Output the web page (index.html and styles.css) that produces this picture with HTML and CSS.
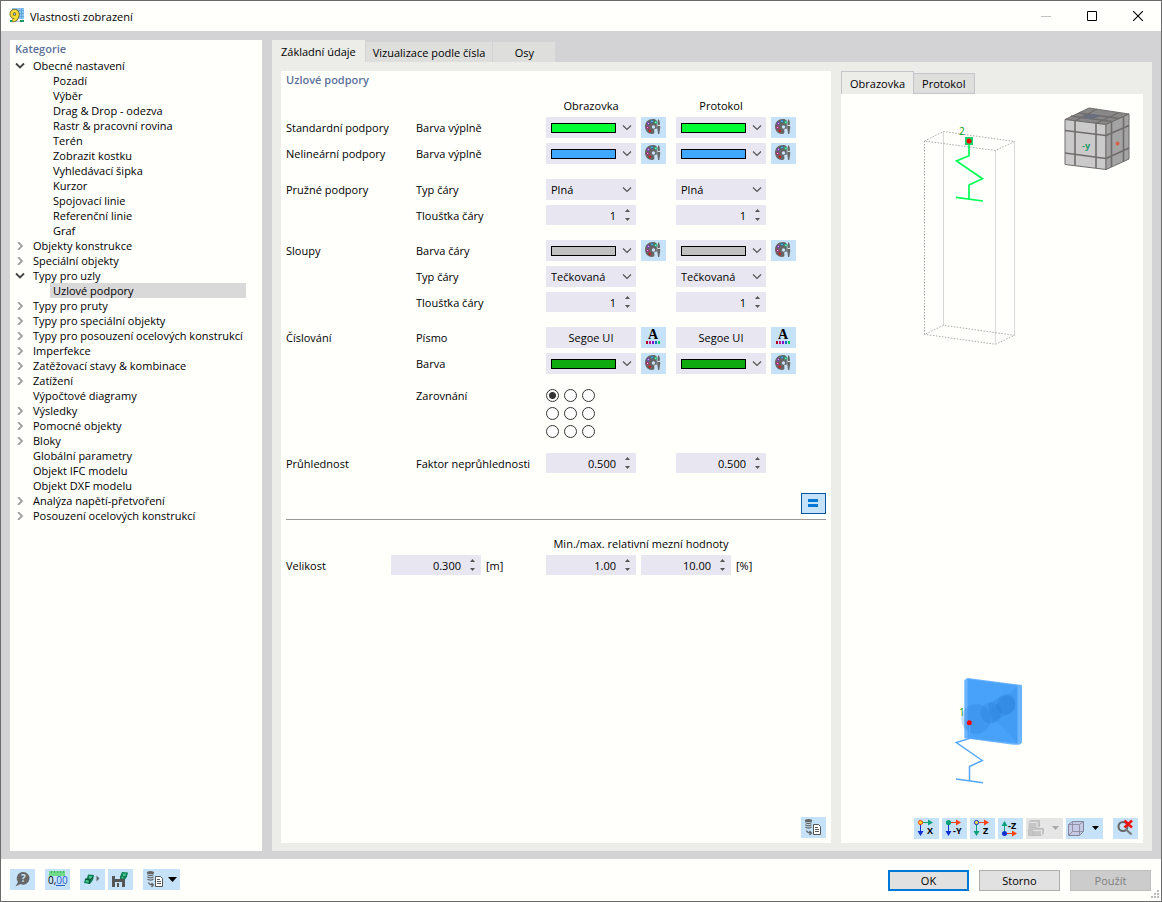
FILE: index.html
```html
<!DOCTYPE html>
<html lang="cs">
<head>
    <meta charset="UTF-8">
    <meta name="viewport" content="width=device-width, initial-scale=1.0">
    <title>Vlastnosti zobrazení</title>
    <link rel="stylesheet" href="styles.css">
</head>
<body>
    <!-- shared icons -->
    <svg class="defs" aria-hidden="true">
        <symbol id="open" viewBox="0 0 10 8"><path d="M1 1.500l4 4 4-4" fill="none" stroke="#444" stroke-width="1.800"/></symbol>
        <symbol id="closed" viewBox="0 0 10 8"><path d="M3 0l4 4-4 4" fill="none" stroke="#a0a0a0" stroke-width="1.800"/></symbol>
        <symbol id="chevron" viewBox="0 0 10 6"><path d="M1 .5l4 4 4-4" fill="none" stroke="#555" stroke-width="1.200"/></symbol>
        <symbol id="palette" viewBox="0 0 25 21">
            <path d="M12 2C7 2 4 5.500 4 9.500c0 4.500 3 7.500 7 7.500 2.300 0 2.800-1.500 2.300-3-.5-1.500.2-2.200 1.300-2.200h1.200V4C15 2.500 13.800 2 12 2z" fill="#666"/>
            <circle cx="12.500" cy="10" r="1.700" fill="#c5e2f8"/>
            <circle cx="7.300" cy="6.500" r="1.300" fill="#8a2be2"/><circle cx="11" cy="4.200" r="1.300" fill="#0a84c0"/>
            <circle cx="14.800" cy="5.300" r="1.400" fill="#10c878"/><circle cx="6.500" cy="10.500" r="1.300" fill="#d0108c"/>
            <circle cx="8.800" cy="13.800" r="1.400" fill="#d02020"/>
            <g fill="#fff"><circle cx="7.300" cy="6.500" r=".5"/><circle cx="14.800" cy="5.300" r=".5"/><circle cx="6.500" cy="10.500" r=".5"/><circle cx="11" cy="4.200" r=".5"/></g>
            <path d="M17.500 2c1.200 1.500 1.800 4 1.200 6l.6 2-1 7h-1.200l-1-7 .6-2c-.4-2-.2-4 .8-6z" fill="#666"/>
            <path d="M16.800 8.500h2.400" stroke="#ddd" stroke-width="1"/>
        </symbol>
        <symbol id="database" viewBox="0 0 25 21">
            <g fill="none" stroke="#666" stroke-width="1.200"><ellipse cx="7.500" cy="3.700" rx="3" ry="1" fill="#666"/><path d="M4.500 5.500c1 1.500 5 1.500 6 0M4.500 7.700c1 1.500 5 1.500 6 0M4.500 9.900c1 1.500 5 1.500 6 0M5.500 13.500c.5 1.500 2 2.500 5 2.500M8.500 14l2 2-2 2"/></g>
            <path d="M12.500 7.500h5l2 2v8h-7z" fill="#fff" stroke="#555"/><path d="M14 10.500h3M14 12.500h4M14 14.500h4" stroke="#555"/>
        </symbol>
    </svg>

    <div class="window">
        <header class="titlebar">
            <svg class="app-icon" width="16" height="16" viewBox="0 0 16 16" aria-hidden="true">
                <path d="M3 0h12v11H3z" fill="#8dc4f0"/><path d="M4 2.500h11M8 5.500h7M10 8.500h5M12.500 0v11" stroke="#5ba3df" stroke-width=".8"/>
                <path d="M2 13h13v1H2z" fill="#b9c9d2"/><path d="M11 12h4v2h-4zM1 12h3v2H1z" fill="#169860"/>
                <g fill="none" stroke="#6d6220" stroke-width="4"><circle cx="5.500" cy="6" r="3"/><path d="M8.500 6c0 4-1.500 6-5 6.500"/></g>
                <g fill="none" stroke="#f7dc37" stroke-width="2.400"><circle cx="5.500" cy="6" r="3"/><path d="M8.500 6c0 4-1.500 6-5 6.500"/></g>
            </svg>
            <h1>Vlastnosti zobrazení</h1>
            <button class="win-button" aria-label="Minimalizovat" disabled><svg width="10" height="10"><path d="M0 5.500h10" stroke="#c4c4c4"/></svg></button>
            <button class="win-button" aria-label="Maximalizovat"><svg width="10" height="10"><path d="M.5.500h9v9h-9z" fill="none" stroke="#000"/></svg></button>
            <button class="win-button" aria-label="Zavřít"><svg width="10" height="10"><path d="M0 0l10 10M10 0L0 10" stroke="#000" stroke-width="1.100"/></svg></button>
        </header>

        <main class="content">
            <nav class="categories" aria-label="Kategorie">
                <h2>Kategorie</h2>
                <ul class="tree">
                    <li><a href="#"><svg><use href="#open"/></svg>Obecné nastavení</a>
                        <ul>
                            <li><a href="#">Pozadí</a></li>
                            <li><a href="#">Výběr</a></li>
                            <li><a href="#">Drag &amp; Drop - odezva</a></li>
                            <li><a href="#">Rastr &amp; pracovní rovina</a></li>
                            <li><a href="#">Terén</a></li>
                            <li><a href="#">Zobrazit kostku</a></li>
                            <li><a href="#">Vyhledávací šipka</a></li>
                            <li><a href="#">Kurzor</a></li>
                            <li><a href="#">Spojovací linie</a></li>
                            <li><a href="#">Referenční linie</a></li>
                            <li><a href="#">Graf</a></li>
                        </ul>
                    </li>
                    <li><a href="#"><svg><use href="#closed"/></svg>Objekty konstrukce</a></li>
                    <li><a href="#"><svg><use href="#closed"/></svg>Speciální objekty</a></li>
                    <li><a href="#"><svg><use href="#open"/></svg>Typy pro uzly</a>
                        <ul>
                            <li><a href="#" class="selected" aria-current="true">Uzlové podpory</a></li>
                        </ul>
                    </li>
                    <li><a href="#"><svg><use href="#closed"/></svg>Typy pro pruty</a></li>
                    <li><a href="#"><svg><use href="#closed"/></svg>Typy pro speciální objekty</a></li>
                    <li><a href="#"><svg><use href="#closed"/></svg>Typy pro posouzení ocelových konstrukcí</a></li>
                    <li><a href="#"><svg><use href="#closed"/></svg>Imperfekce</a></li>
                    <li><a href="#"><svg><use href="#closed"/></svg>Zatěžovací stavy &amp; kombinace</a></li>
                    <li><a href="#"><svg><use href="#closed"/></svg>Zatížení</a></li>
                    <li><a href="#"><svg></svg>Výpočtové diagramy</a></li>
                    <li><a href="#"><svg><use href="#closed"/></svg>Výsledky</a></li>
                    <li><a href="#"><svg><use href="#closed"/></svg>Pomocné objekty</a></li>
                    <li><a href="#"><svg><use href="#closed"/></svg>Bloky</a></li>
                    <li><a href="#"><svg></svg>Globální parametry</a></li>
                    <li><a href="#"><svg></svg>Objekt IFC modelu</a></li>
                    <li><a href="#"><svg></svg>Objekt DXF modelu</a></li>
                    <li><a href="#"><svg><use href="#closed"/></svg>Analýza napětí-přetvoření</a></li>
                    <li><a href="#"><svg><use href="#closed"/></svg>Posouzení ocelových konstrukcí</a></li>
                </ul>
            </nav>

            <div class="editor">
                <div class="tabs" role="tablist">
                    <button class="tab active" role="tab" aria-selected="true">Základní údaje</button>
                    <button class="tab" role="tab">Vizualizace podle čísla</button>
                    <button class="tab" role="tab">Osy</button>
                </div>

                <div class="panel">
                    <form class="settings">
                        <h2>Uzlové podpory</h2>
                        <div class="row head"><span class="col-screen">Obrazovka</span><span>Protokol</span></div>

                        <div class="group">
                            <div class="row">
                                <span>Standardní podpory</span><span>Barva výplně</span>
                                <div class="field"><span class="combo"><select aria-label="Standardní podpory, obrazovka"><option></option></select><i class="swatch green"></i><svg><use href="#chevron"/></svg></span><button type="button" class="icon-button" aria-label="Vybrat barvu"><svg><use href="#palette"/></svg></button></div>
                                <div class="field"><span class="combo"><select aria-label="Standardní podpory, protokol"><option></option></select><i class="swatch green"></i><svg><use href="#chevron"/></svg></span><button type="button" class="icon-button" aria-label="Vybrat barvu"><svg><use href="#palette"/></svg></button></div>
                            </div>
                            <div class="row">
                                <span>Nelineární podpory</span><span>Barva výplně</span>
                                <div class="field"><span class="combo"><select aria-label="Nelineární podpory, obrazovka"><option></option></select><i class="swatch blue"></i><svg><use href="#chevron"/></svg></span><button type="button" class="icon-button" aria-label="Vybrat barvu"><svg><use href="#palette"/></svg></button></div>
                                <div class="field"><span class="combo"><select aria-label="Nelineární podpory, protokol"><option></option></select><i class="swatch blue"></i><svg><use href="#chevron"/></svg></span><button type="button" class="icon-button" aria-label="Vybrat barvu"><svg><use href="#palette"/></svg></button></div>
                            </div>
                        </div>

                        <div class="group">
                            <div class="row">
                                <span>Pružné podpory</span><label for="spring-type">Typ čáry</label>
                                <div class="field"><span class="combo"><select id="spring-type"><option>Plná</option></select><svg><use href="#chevron"/></svg></span></div>
                                <div class="field"><span class="combo"><select aria-label="Typ čáry, protokol"><option>Plná</option></select><svg><use href="#chevron"/></svg></span></div>
                            </div>
                            <div class="row">
                                <label class="second" for="spring-width">Tloušťka čáry</label>
                                <div class="field"><span class="spin"><input id="spring-width" type="number" value="1"><button type="button" class="up" aria-label="Zvýšit"></button><button type="button" class="down" aria-label="Snížit"></button></span></div>
                                <div class="field"><span class="spin"><input aria-label="Tloušťka čáry, protokol" type="number" value="1"><button type="button" class="up" aria-label="Zvýšit"></button><button type="button" class="down" aria-label="Snížit"></button></span></div>
                            </div>
                        </div>

                        <div class="group">
                            <div class="row">
                                <span>Sloupy</span><span>Barva čáry</span>
                                <div class="field"><span class="combo"><select aria-label="Barva čáry, obrazovka"><option></option></select><i class="swatch gray"></i><svg><use href="#chevron"/></svg></span><button type="button" class="icon-button" aria-label="Vybrat barvu"><svg><use href="#palette"/></svg></button></div>
                                <div class="field"><span class="combo"><select aria-label="Barva čáry, protokol"><option></option></select><i class="swatch gray"></i><svg><use href="#chevron"/></svg></span><button type="button" class="icon-button" aria-label="Vybrat barvu"><svg><use href="#palette"/></svg></button></div>
                            </div>
                            <div class="row">
                                <label class="second" for="column-type">Typ čáry</label>
                                <div class="field"><span class="combo"><select id="column-type"><option>Tečkovaná</option></select><svg><use href="#chevron"/></svg></span></div>
                                <div class="field"><span class="combo"><select aria-label="Typ čáry sloupu, protokol"><option>Tečkovaná</option></select><svg><use href="#chevron"/></svg></span></div>
                            </div>
                            <div class="row">
                                <label class="second" for="column-width">Tloušťka čáry</label>
                                <div class="field"><span class="spin"><input id="column-width" type="number" value="1"><button type="button" class="up" aria-label="Zvýšit"></button><button type="button" class="down" aria-label="Snížit"></button></span></div>
                                <div class="field"><span class="spin"><input aria-label="Tloušťka čáry sloupu, protokol" type="number" value="1"><button type="button" class="up" aria-label="Zvýšit"></button><button type="button" class="down" aria-label="Snížit"></button></span></div>
                            </div>
                        </div>

                        <div class="group">
                            <div class="row">
                                <span>Číslování</span><span>Písmo</span>
                                <div class="field"><button type="button" class="font-name">Segoe UI</button><button type="button" class="icon-button" aria-label="Vybrat písmo"><svg viewBox="0 0 25 21"><text x="12" y="12" text-anchor="middle" class="font-letter">A</text><path d="M5 14h2v3H5z" fill="#b00020"/><path d="M8 14h2v3H8z" fill="#c71585"/><path d="M11 14h2v3h-2z" fill="#8a10d0"/><path d="M14 14h2v3h-2z" fill="#1070b0"/><path d="M17 14h2v3h-2z" fill="#10c860"/></svg></button></div>
                                <div class="field"><button type="button" class="font-name">Segoe UI</button><button type="button" class="icon-button" aria-label="Vybrat písmo"><svg viewBox="0 0 25 21"><text x="12" y="12" text-anchor="middle" class="font-letter">A</text><path d="M5 14h2v3H5z" fill="#b00020"/><path d="M8 14h2v3H8z" fill="#c71585"/><path d="M11 14h2v3h-2z" fill="#8a10d0"/><path d="M14 14h2v3h-2z" fill="#1070b0"/><path d="M17 14h2v3h-2z" fill="#10c860"/></svg></button></div>
                            </div>
                            <div class="row">
                                <span class="second">Barva</span>
                                <div class="field"><span class="combo"><select aria-label="Barva číslování, obrazovka"><option></option></select><i class="swatch dark-green"></i><svg><use href="#chevron"/></svg></span><button type="button" class="icon-button" aria-label="Vybrat barvu"><svg><use href="#palette"/></svg></button></div>
                                <div class="field"><span class="combo"><select aria-label="Barva číslování, protokol"><option></option></select><i class="swatch dark-green"></i><svg><use href="#chevron"/></svg></span><button type="button" class="icon-button" aria-label="Vybrat barvu"><svg><use href="#palette"/></svg></button></div>
                            </div>
                        </div>

                        <div class="group">
                            <div class="row top">
                                <span class="second">Zarovnání</span>
                                <div class="align" role="radiogroup" aria-label="Zarovnání">
                                    <input type="radio" name="align" aria-label="Vlevo nahoře" checked>
                                    <input type="radio" name="align" aria-label="Nahoře">
                                    <input type="radio" name="align" aria-label="Vpravo nahoře">
                                    <input type="radio" name="align" aria-label="Vlevo">
                                    <input type="radio" name="align" aria-label="Uprostřed">
                                    <input type="radio" name="align" aria-label="Vpravo">
                                    <input type="radio" name="align" aria-label="Vlevo dole">
                                    <input type="radio" name="align" aria-label="Dole">
                                    <input type="radio" name="align" aria-label="Vpravo dole">
                                </div>
                            </div>
                        </div>

                        <div class="group">
                            <div class="row">
                                <span>Průhlednost</span><label for="opacity">Faktor neprůhlednosti</label>
                                <div class="field"><span class="spin"><input id="opacity" type="number" step="0.001" value="0.500"><button type="button" class="up" aria-label="Zvýšit"></button><button type="button" class="down" aria-label="Snížit"></button></span></div>
                                <div class="field"><span class="spin"><input aria-label="Faktor neprůhlednosti, protokol" type="number" step="0.001" value="0.500"><button type="button" class="up" aria-label="Zvýšit"></button><button type="button" class="down" aria-label="Snížit"></button></span></div>
                            </div>
                        </div>

                        <div class="sync">
                            <button type="button" class="icon-button equal" aria-label="Stejné hodnoty"><svg viewBox="0 0 25 21"><path d="M7 6h10v3H7zM7 11h10v3H7z" fill="#0078d7"/></svg></button>
                        </div>

                        <div class="limits-head">Min./max. relativní mezní hodnoty</div>
                        <div class="size-row">
                            <label for="size">Velikost</label>
                            <div class="size-field"><span class="spin"><input id="size" type="number" step="0.001" value="0.300"><button type="button" class="up" aria-label="Zvýšit"></button><button type="button" class="down" aria-label="Snížit"></button></span><span>[m]</span></div>
                            <div class="size-field"><span class="spin"><input aria-label="Min. hodnota" type="number" step="0.01" value="1.00"><button type="button" class="up" aria-label="Zvýšit"></button><button type="button" class="down" aria-label="Snížit"></button></span><span class="spin"><input aria-label="Max. hodnota" type="number" step="0.01" value="10.00"><button type="button" class="up" aria-label="Zvýšit"></button><button type="button" class="down" aria-label="Snížit"></button></span><span>[%]</span></div>
                        </div>

                        <div class="form-footer">
                            <button type="button" class="icon-button" aria-label="Použít výchozí"><svg><use href="#database"/></svg></button>
                        </div>
                    </form>

                    <section class="preview">
                        <div class="preview-tabs" role="tablist">
                            <button class="preview-tab active" role="tab" aria-selected="true">Obrazovka</button>
                            <button class="preview-tab" role="tab">Protokol</button>
                        </div>
                        <div class="viewport">
                            <svg class="scene" viewBox="0 0 302 724" preserveAspectRatio="xMidYMin meet" aria-hidden="true">
                                <!-- column outline -->
                                <g fill="none" stroke="#d8d8d8">
                                    <path d="M102.500 37.500v194M154.500 56v194M173.500 47.500v194"/>
                                    <g stroke="#aaa" stroke-dasharray="1.500 1.500"><path d="M83.500 47v193.500L102.500 231.300l71 10-19 9-71-10M83.500 47l19-9.500 71 10-19 9z"/></g>
                                </g>
                                <!-- top support -->
                                <path d="M128 47v14.700L115.500 67l26 17.700L128 91v13.500M115 103.300l27 3.700" fill="none" stroke="#00ff55" stroke-width="1.700"/>
                                <path d="M124 43h8v8h-8z" fill="#12d566"/><circle cx="128" cy="47" r="2.500" fill="#f00"/>
                                <text x="118" y="41" class="node-label">2</text>
                                <!-- bottom support -->
                                <path d="M123.300 586l3.400-2L181 591v57.700l-2.700 2h-6l-49-6.400z" fill="#6bb4ff"/>
                                <path d="M126.700 585l49.600 6.500v58L126.700 644z" fill="#48a2fa"/>
                                <path d="M176.300 592.500l-29 25.500 29 31.500z" fill="#439cf4"/>
                                <g fill="#2378cf" fill-opacity=".25"><circle cx="135" cy="625" r="14.700"/><circle cx="150" cy="619" r="10.500"/><path d="M147 610l16-9.500c7-2 12 3 11 10-1 5-3 7-6 9l-17 9z"/><circle cx="165" cy="611" r="9.500"/></g>
                                <path d="M128.500 630v14.500L115.300 648.500l26 18L128.500 672.500v14M115 685l27 3.700" fill="none" stroke="#55a8fa" stroke-width="1.500"/>
                                <circle cx="128.300" cy="628.700" r="2.500" fill="#f00"/>
                                <text x="118" y="622" class="node-label">1</text>
                                <!-- navigation cube -->
                                <g stroke="#716c6c" stroke-linejoin="round">
                                    <path d="M248 14l40 6-23 10.500-41-5z" fill="#888"/>
                                    <path d="M224 25.500l41 5v45l-41-5z" fill="#cacaca"/>
                                    <path d="M265 30.500L288 20v45l-23 10.500z" fill="#a4a4a4"/>
                                    <path d="M238 19l40.500 5.500M230 22l41 5.500M234 27l22-12M255 29.500l23-11" stroke-width="1.300"/>
                                    <path d="M234 26.500v45M255 29v45M224 36.500l41 5L288 31.500M224 59l41 5.500L288 54M270.500 28v45M282.500 22.500v45" stroke-width="1.600" fill="none"/>
                                </g>
                                <path d="M241 22l12-2 6 3-11 2z" fill="#687080"/>
                                <text x="241" y="55" class="cube-label">-y</text>
                                <circle cx="276.500" cy="49.500" r="2" fill="#d65f4a"/>
                            </svg>
                            <div class="view-tools">
                                <button class="icon-button" aria-label="Pohled X"><svg viewBox="0 0 25 21"><path d="M6 4h9v1H6z" fill="#0aa078"/><path d="M14 1.500l5 3-5 3z" fill="#0aa078"/><path d="M6 5h1v9H6z" fill="#1030d0"/><path d="M3.500 13h6l-3 5z" fill="#1030d0"/><circle cx="6.500" cy="4.500" r="2.100" fill="#ffd020" stroke="#f04010"/><text x="13" y="16" class="axis">X</text></svg></button>
                                <button class="icon-button" aria-label="Pohled -Y"><svg viewBox="0 0 25 21"><path d="M6 4h9v1H6z" fill="#ff4010"/><path d="M14 1.500l5 3-5 3z" fill="#ff4010"/><path d="M6 5h1v9H6z" fill="#1030d0"/><path d="M3.500 13h6l-3 5z" fill="#1030d0"/><circle cx="6.500" cy="4.500" r="2.600" fill="#0aa078"/><text x="11" y="16" class="axis">-Y</text></svg></button>
                                <button class="icon-button" aria-label="Pohled Z"><svg viewBox="0 0 25 21"><path d="M6 4h9v1H6z" fill="#ff4010"/><path d="M14 1.500l5 3-5 3z" fill="#ff4010"/><path d="M6 5h1v9H6z" fill="#0aa078"/><path d="M3.500 13h6l-3 5z" fill="#0aa078"/><circle cx="6.500" cy="4.500" r="2.100" fill="#ffe040" stroke="#1030d0"/><text x="13" y="16" class="axis">Z</text></svg></button>
                                <button class="icon-button" aria-label="Pohled -Z"><svg viewBox="0 0 25 21"><path d="M6 6h1v9H6z" fill="#0aa078"/><path d="M3.500 8l3-5 3 5z" fill="#0aa078"/><path d="M6 15h9v1H6z" fill="#ff4010"/><path d="M14 12.500l5 3-5 3z" fill="#ff4010"/><circle cx="6.500" cy="15.500" r="2.500" fill="#1030d0"/><text x="10" y="11" class="axis">-Z</text></svg></button>
                                <button class="icon-button wide" aria-label="Typ zobrazení" disabled><svg viewBox="0 0 37 21"><g fill="#c6c6c6" stroke="#b4b4b4" stroke-width=".7"><path d="M3 4l2-1.500h8.500v6L11 10H3z"/><path d="M2.500 11h5.500v6.500H2.500z"/><path d="M7 12.500l2-2h8.500v5l-2 2H7z"/></g><path d="M3 4.500h8V10M7 12.500h8.500v5" fill="none" stroke="#e6e6e6"/><path d="M26 8h7l-3.500 4z" fill="#a8a8a8"/></svg></button>
                                <button class="icon-button wide" aria-label="Průhlednost modelu"><svg viewBox="0 0 37 21"><path d="M2.500 6.500l4-3h11v10l-4 4h-11z" fill="#c5c9e4" stroke="#85859c"/><path d="M2.500 6.500h11l4-3M13.500 6.500v11M6.500 3.500v10h11M6.500 13.500l-4 4" fill="none" stroke="#85859c" stroke-width=".8"/><path d="M26 8h7l-3.500 4z"/></svg></button>
                                <button class="icon-button reset" aria-label="Zrušit přiblížení"><svg viewBox="0 0 25 21"><circle cx="10" cy="8.500" r="4.500" fill="none" stroke="#666" stroke-width="2"/><path d="M13 11.500l5.500 5" stroke="#777" stroke-width="2.200"/><path d="M11.500 2.500l7.500 7M19 2.500l-7.500 7" stroke="#f01010" stroke-width="2.400"/></svg></button>
                            </div>
                        </div>
                    </section>
                </div>
            </div>
        </main>

        <footer class="footer">
            <button class="icon-button" aria-label="Nápověda"><svg viewBox="0 0 25 21"><path d="M13 3a6.300 6.300 0 1 1-2.500 12L5.500 17.500 8 13A6.300 6.300 0 0 1 13 3z" fill="#666"/><text x="11" y="13" class="help-mark">?</text></svg></button>
            <button class="icon-button units" aria-label="Jednotky"><svg viewBox="0 0 25 21"><path d="M4 2h16v5H4z" fill="#6fdc8a"/><path d="M6.500 2v2M9.500 2v2M12.500 2v2M15.500 2v2M18.500 2v2" stroke="#2f9e50" stroke-width=".7"/><text x="3" y="15" class="units-text">0,<tspan fill="#2a5bd0">00</tspan></text><path d="M11 16.500h9" stroke="#2a5bd0"/></svg></button>
            <button class="icon-button" aria-label="Načíst"><svg viewBox="0 0 25 21"><path d="M8 5.500l6 .5-1 5-3 4-6-1 1-4 2-1z" fill="#0c8050"/><path d="M9 7h3l-.5 3-2.500-.5zM6 11l3 .5-.5 2-3-.5z" fill="#49c592"/><path d="M5 10l5 1 3-3M10 11l-1 4" fill="none" stroke="#04402a" stroke-width=".8"/><path d="M16.500 6.500v6l3-3z" fill="#666"/></svg></button>
            <button class="icon-button" aria-label="Uložit"><svg viewBox="0 0 25 21"><path d="M4 7h11l2 2v9H4z" fill="#555"/><path d="M7 7h5v3H7zM7 13h7v5H7z" fill="#c5e2f8"/><path d="M9 14h2v4H9z" fill="#555"/><path d="M14 3l6 .5-1 4-2 3-5-1 .5-3z" fill="#0c8050"/><path d="M15 4.500h3l-.5 2.500H15zM13.500 7.500l2 .5v1.500l-2-.5z" fill="#49c592"/></svg></button>
            <button class="icon-button wide defaults" aria-label="Výchozí nastavení"><svg viewBox="0 0 37 21"><use href="#database" width="25" height="21"/><path d="M25 8h9l-4.500 5z"/></svg></button>
            <div class="actions">
                <button class="action primary">OK</button>
                <button class="action">Storno</button>
                <button class="action" disabled>Použít</button>
            </div>
            <svg class="grip" width="10" height="10" aria-hidden="true"><path d="M7 0h2v2H7zM4 3h2v2H4zM7 3h2v2H7zM1 6h2v2H1zM4 6h2v2H4zM7 6h2v2H7z" fill="#bbb"/></svg>
        </footer>
    </div>
</body>
</html>
```
FILE: styles.css
```css
:root {
    --paper: #fffffc;
    --frame: #d3d3d6;
    --panel: #ecece8;
    --tab: #dededc;
    --field: #e8e7f1;
    --tool: #c5e2f8;
    --heading: #5b719b;
}

* {
    box-sizing: border-box;
}

body {
    margin: 0;
    font-family: "Open Sans", "Noto Sans", sans-serif;
    font-size: 11px;
    line-height: 15px;
    color: #000;
}

button, input, select {
    font: inherit;
    color: inherit;
    margin: 0;
    padding: 0;
    border: 0;
    border-radius: 0;
}

svg {
    display: block;
}

.defs {
    display: none;
}

h2 {
    margin: 0;
    font-size: 11px;
    line-height: 18px;
    font-weight: 600;
    color: var(--heading);
}

.window {
    display: flex;
    flex-direction: column;
    min-height: 100vh;
    border: 1px solid #6b6b6b;
    background: var(--paper);
}

/* title bar */

.titlebar {
    display: flex;
    align-items: center;
    height: 30px;
    padding-left: 8px;
}

.titlebar h1 {
    flex: 1;
    margin: 0 0 0 5px;
    font-size: 11px;
    font-weight: 400;
}

.win-button {
    display: flex;
    align-items: center;
    justify-content: center;
    width: 46px;
    height: 30px;
    background: none;
}

/* body */

.content {
    flex: 1;
    display: flex;
    gap: 10px;
    padding: 9px 9px 8px;
    background: var(--frame);
}

.categories {
    width: 252px;
    padding: 0 5px;
    background: var(--paper);
}

.tree, .tree ul {
    list-style: none;
    margin: 0;
    padding: 0;
}

.tree a {
    display: flex;
    align-items: center;
    height: 15px;
    color: inherit;
    text-decoration: none;
    white-space: nowrap;
}

.tree a svg {
    width: 10px;
    height: 8px;
    margin-right: 8px;
}

.tree ul {
    padding: 0 11px 0 35px;
}

.tree ul a {
    padding-left: 3px;
}

.tree .selected {
    background: #d9d9d9;
}

.editor {
    flex: 1;
    display: flex;
    flex-direction: column;
}

.tabs {
    display: flex;
    align-items: flex-end;
    gap: 1px;
    height: 22px;
}

.tab {
    min-width: 62px;
    height: 20px;
    padding: 0 7px;
    background: var(--tab);
}

.tab.active {
    height: 22px;
    padding: 1px 9px 0;
    background: var(--panel);
}

.panel {
    flex: 1;
    display: flex;
    gap: 10px;
    padding: 9px 9px 8px;
    background: var(--panel);
}

/* settings form */

.settings {
    flex: 1;
    display: flex;
    flex-direction: column;
    padding: 0 5px 5px;
    background: var(--paper);
}

.row {
    display: grid;
    grid-template-columns: repeat(4, 130px);
    align-items: center;
}

.row.top {
    align-items: start;
    line-height: 13px;
}

.head {
    margin: 7px 0 2px;
    line-height: 19px;
    text-align: center;
}

.head span {
    width: 90px;
}

.col-screen {
    grid-column: 3;
}

.second {
    grid-column: 2;
}

.group {
    display: flex;
    flex-direction: column;
    gap: 5px;
    margin-bottom: 15px;
}

.field {
    display: flex;
    gap: 5px;
}

.combo {
    position: relative;
    width: 90px;
    height: 21px;
}

.combo select {
    appearance: none;
    width: 100%;
    height: 100%;
    padding: 0 20px 0 5px;
    background: var(--field);
}

.combo svg {
    position: absolute;
    top: 8px;
    right: 4px;
    width: 10px;
    height: 6px;
    pointer-events: none;
}

.swatch {
    position: absolute;
    top: 6px;
    left: 5px;
    width: 65px;
    height: 10px;
    border: 1px solid #000;
    pointer-events: none;
}

.green {
    background: #00ff33;
}

.blue {
    background: #40a8ff;
}

.gray {
    background: #c0c0c0;
}

.dark-green {
    background: #0faa0f;
}

.spin {
    position: relative;
    width: 90px;
    height: 20px;
}

.spin input {
    appearance: textfield;
    width: 100%;
    height: 100%;
    padding-right: 20px;
    text-align: right;
    background: var(--field);
}

.spin input::-webkit-inner-spin-button {
    appearance: none;
    margin: 0;
}

.spin button {
    position: absolute;
    right: 6px;
    width: 5px;
    height: 3px;
    background: #555;
}

.spin .up {
    top: 4px;
    clip-path: polygon(50% 0, 100% 100%, 0 100%);
}

.spin .down {
    bottom: 4px;
    clip-path: polygon(0 0, 100% 0, 50% 100%);
}

.font-name {
    width: 90px;
    height: 21px;
    background: var(--field);
}

.icon-button {
    width: 25px;
    height: 21px;
    background: var(--tool);
}

.icon-button svg {
    width: 100%;
    height: 21px;
}

.icon-button.wide {
    width: 37px;
}

.icon-button:disabled {
    background: #e6e6e6;
}

.align {
    display: grid;
    grid-template-columns: repeat(3, 13px);
    gap: 5px;
}

.align input {
    appearance: none;
    width: 13px;
    height: 13px;
    border: 1px solid #333;
    border-radius: 50%;
    background: #fff;
}

.align input:checked {
    background: radial-gradient(circle, #333 3px, #fff 4px);
}

.sync {
    display: flex;
    justify-content: flex-end;
    margin-top: 5px;
    padding-bottom: 5px;
    border-bottom: 1px solid #999;
}

.equal {
    outline: 1px solid #0055a5;
    outline-offset: -1px;
}

.limits-head {
    width: 190px;
    margin: 14px 0 2px 260px;
    line-height: 19px;
    text-align: center;
}

.size-row {
    display: grid;
    grid-template-columns: 105px 155px 1fr;
    align-items: center;
}

.size-field {
    display: flex;
    align-items: center;
    gap: 5px;
}

.form-footer {
    display: flex;
    justify-content: flex-end;
    margin-top: auto;
}

/* preview */

.preview {
    display: flex;
    flex-direction: column;
    width: 302px;
}

.preview-tabs {
    display: flex;
    align-items: flex-end;
    height: 23px;
}

.preview-tab {
    height: 21px;
    padding: 0 8px;
    border: 1px solid #c4c4cc;
    border-left: 0;
    background: var(--tab);
}

.preview-tab.active {
    height: 23px;
    border-left: 1px solid #c4c4cc;
    border-bottom: 0;
    background: var(--panel);
}

.viewport {
    flex: 1;
    display: flex;
    flex-direction: column;
    padding-bottom: 4px;
    background: var(--paper);
}

.scene {
    flex: 1;
    width: 100%;
}

.view-tools {
    display: flex;
    justify-content: flex-end;
    gap: 3px;
    padding-right: 5px;
}

.reset {
    margin-left: 7px;
}

.node-label {
    font-size: 10px;
    fill: #0a9c0a;
}

.cube-label {
    font-size: 9px;
    font-weight: 700;
    fill: #1f9c66;
}

.axis {
    font-size: 9px;
    font-weight: 700;
}

.font-letter {
    font-family: "Liberation Serif", serif;
    font-size: 14px;
    font-weight: 700;
}

.help-mark {
    font-size: 10px;
    font-weight: 700;
    fill: #c5e2f8;
}

.units-text {
    font-size: 10px;
}

/* footer */

.footer {
    position: relative;
    display: flex;
    gap: 3px;
    padding: 10px 10px 10px 9px;
}

.units, .defaults {
    margin-left: 7px;
}

.units {
    margin-right: 7px;
}

.actions {
    display: flex;
    gap: 10px;
    margin-left: auto;
    padding-top: 1px;
}

.action {
    width: 81px;
    height: 21px;
    border: 1px solid #adadad;
    background: #e1e1e1;
}

.action.primary {
    border: 2px solid #0078d7;
}

.action:disabled {
    border-color: #bfbfbf;
    background: #ccc;
    color: #808080;
}

.grip {
    position: absolute;
    right: 1px;
    bottom: 1px;
}
```
